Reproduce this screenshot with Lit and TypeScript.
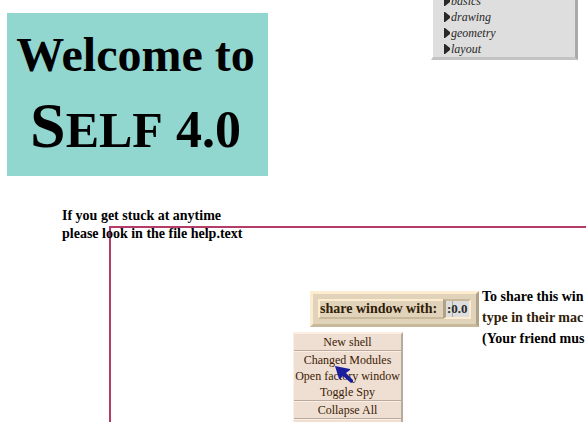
import { LitElement, html, css } from "lit";
import { customElement, property } from "lit/decorators.js";

@customElement("welcome-banner")
class WelcomeBanner extends LitElement {
  static styles = css`
    :host {
      display: flex;
      flex-direction: column;
      align-items: center;
      box-sizing: border-box;
      width: 261px;
      padding: 10px 4px 7px 0;
      background: #92d6d0;
      color: #000;
    }
    h1 {
      display: contents;
      font-size: 48px;
      font-weight: bold;
    }
    .line {
      white-space: pre;
      line-height: 64px;
    }
    .product {
      line-height: 78px;
      font-size: 64px;
    }
    .caps {
      font-size: 50px;
    }
    .version {
      font-size: 52px;
    }
  `;
  render() {
    return html`<h1>
      <span class="line">Welcome to</span>
      <span class="line product">S<span class="caps">ELF</span><span class="version"> 4.0</span></span>
    </h1>`;
  }
}

@customElement("category-list")
class CategoryList extends LitElement {
  @property({ attribute: false }) items: string[] = [];
  static styles = css`
    :host {
      display: block;
      box-sizing: border-box;
      width: 147px;
      background: #dedede;
      border: solid;
      border-width: 0 3px 3px 2px;
      border-color: #fff #a9a9a9 #c3c3c3 #fff;
    }
    ul {
      list-style: none;
      margin: 0;
      padding: 0 0 0 11px;
    }
    button {
      display: flex;
      align-items: center;
      gap: 1px;
      height: 16px;
      padding: 0;
      border: 0;
      background: none;
      color: #282828;
      font: italic 12px/16px "Liberation Serif", serif;
    }
    svg {
      display: block;
      fill: #282828;
    }
  `;
  render() {
    return html`<ul>
      ${this.items.map(
        (name) => html`<li>
          <button>
            <svg width="6" height="10" viewBox="0 0 6 10" aria-hidden="true">
              <path d="M0 0H1L6 4V6L1 10H0Z" />
            </svg>
            ${name}
          </button>
        </li>`
      )}
    </ul>`;
  }
}

@customElement("share-box")
class ShareBox extends LitElement {
  static styles = css`
    :host {
      display: flex;
      box-sizing: border-box;
      width: 169px;
      padding: 5px;
      background: #e1d3b9;
      border: 3px solid;
      border-color: #feecd0 #b1a186 #c8b99a #feecd0;
    }
    label,
    .field {
      box-sizing: border-box;
      height: 20px;
      border: 2px solid;
      font: bold 14px/16px "Liberation Serif", serif;
    }
    label {
      flex: 1;
      white-space: nowrap;
      color: #302008;
      border-color: #feecd0 #c8b99a #c8b99a #feecd0;
      border-right-width: 0;
    }
    .field {
      width: 28px;
      border-color: #c8b99a #feecd0 #feecd0 #b1a186;
      border-left-width: 3px;
    }
    input {
      display: block;
      box-sizing: border-box;
      width: 100%;
      height: 16px;
      margin: 0;
      padding: 0 0 0 1px;
      border: 0;
      border-radius: 0;
      outline: 0;
      background: linear-gradient(#a9a9a9, #a9a9a9) 6px 0 / 1px 100% no-repeat #dedede;
      color: #282828;
      font: bold 13px/16px "Liberation Serif", serif;
    }
  `;
  render() {
    return html`
      <label for="display">share window with:</label>
      <span class="field"><input id="display" type="text" value=":0.0" /></span>
    `;
  }
}

@customElement("background-menu")
class BackgroundMenu extends LitElement {
  @property({ attribute: false }) groups: string[][] = [];
  static styles = css`
    :host {
      display: block;
      box-sizing: border-box;
      width: 110px;
      padding-bottom: 16px;
      background: #eedfd2;
      border: solid;
      border-width: 2px 2px 0 1px;
      border-color: #feeee2 #b9aaa0 #b9aaa0 #feeee2;
    }
    .group {
      border-bottom: 1px solid #b9aaa0;
      box-shadow: 0 1px #feeee2;
      margin-bottom: 1px;
    }
    button {
      display: block;
      width: 100%;
      height: 16px;
      padding: 0;
      border: 0;
      background: none;
      color: #3c1a04;
      font: 12px/16px "Liberation Serif", serif;
      text-align: center;
      white-space: nowrap;
    }
  `;
  render() {
    return this.groups.map(
      (group) => html`<div class="group">${group.map((name) => html`<button>${name}</button>`)}</div>`
    );
  }
}

@customElement("app-root")
class AppRoot extends LitElement {
  static styles = css`
    :host {
      display: block;
      position: relative;
      height: 100vh;
      overflow: hidden;
      background: #fff;
      font-family: "Liberation Serif", serif;
    }
    .item {
      position: absolute;
    }
    .banner {
      left: 7px;
      top: 13px;
    }
    .categories {
      left: 431px;
      top: -7px;
    }
    .frame {
      left: 109px;
      top: 226px;
      right: 0;
      bottom: 0;
      border: solid #b43c68;
      border-width: 2px 0 0 2px;
    }
    .note {
      margin: 0;
      color: #000;
      font-size: 14px;
      font-weight: bold;
      white-space: nowrap;
    }
    .help {
      left: 62px;
      top: 207px;
      line-height: 18px;
    }
    .share-note {
      left: 482px;
      top: 286px;
      line-height: 21px;
    }
    .tinted {
      color: #302008;
    }
    .share {
      left: 310px;
      top: 291px;
    }
    .menu {
      left: 293px;
      top: 332px;
    }
    .cursor {
      left: 335px;
      top: 366px;
      fill: #1a1e9c;
    }
  `;
  render() {
    return html`
      <welcome-banner class="item banner"></welcome-banner>
      <category-list
        class="item categories"
        .items=${["basics", "drawing", "geometry", "layout"]}
      ></category-list>
      <div class="item frame"></div>
      <p class="item note help">If you get stuck at anytime<br />please look in the file help.text</p>
      <share-box class="item share"></share-box>
      <p class="item note share-note">
        To share this win<br /><span class="tinted">type in their mac</span><br />(Your friend mus
      </p>
      <background-menu
        class="item menu"
        .groups=${[["New shell"], ["Changed Modules", "Open factory window", "Toggle Spy"], ["Collapse All"]]}
      ></background-menu>
      <svg class="item cursor" width="19" height="18" viewBox="0 0 19 18" aria-hidden="true">
        <path d="M0 0L15 3V4L11 7L18 14V16L16 17L8 10L5 13H4Z" />
      </svg>
    `;
  }
}
